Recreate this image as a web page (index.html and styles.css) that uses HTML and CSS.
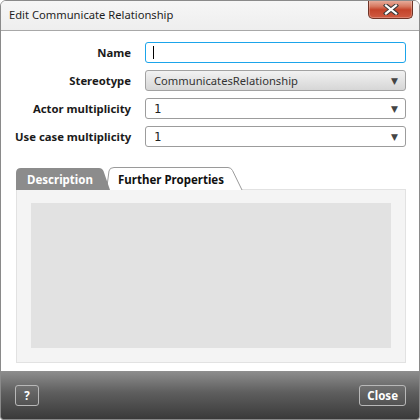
FILE: index.html
```html
<!DOCTYPE html>
<html>
<head>
<meta charset="utf-8">
<link rel="stylesheet" href="styles.css">
</head>
<body>
<div class="window">
  <div class="titlebar">
    <span class="title">Edit Communicate Relationship</span>
    <div class="close-x">
      <svg width="16" height="11" viewBox="0 0 16 11">
        <path d="M3 1.5 L13 9.5 M13 1.5 L3 9.5" stroke="#3a3a3a" stroke-width="4.2" stroke-linecap="square"/>
        <path d="M3 1.5 L13 9.5 M13 1.5 L3 9.5" stroke="#ffffff" stroke-width="2.2" stroke-linecap="square"/>
      </svg>
    </div>
  </div>
  <div class="body">
    <div class="form">
      <label class="lbl">Name</label>
      <div class="field input"><span class="caret"></span></div>
      <label class="lbl">Stereotype</label>
      <div class="field select grad"><span class="val sans">CommunicatesRelationship</span><span class="arrow">▼</span></div>
      <label class="lbl">Actor multiplicity</label>
      <div class="field select"><span class="val mono">1</span><span class="arrow">▼</span></div>
      <label class="lbl">Use case multiplicity</label>
      <div class="field select"><span class="val mono">1</span><span class="arrow">▼</span></div>
    </div>
    <div class="tabs">
      <div class="tabbar">
        <div class="tab tab-desc">
          <svg class="tabshape" width="94" height="23" viewBox="0 0 94 23">
            <path d="M0 23 V6 Q0 1 5 1 H83 Q86 1 87.5 4 L94 23 Z" fill="#8c8c8c"/>
          </svg>
          <span class="tabtext">Description</span>
        </div>
        <div class="tab tab-further">
          <svg class="tabshape" width="137" height="23" viewBox="0 0 137 23">
            <path d="M0.5 23 L3 4 Q3.5 0.5 8 0.5 H122 Q125 0.5 126.5 3.5 L136 23" fill="#ffffff" stroke="#9a9a9a" stroke-width="1"/>
          </svg>
          <span class="tabtext">Further Properties</span>
        </div>
      </div>
      <div class="panel">
        <div class="panel-inner"></div>
      </div>
    </div>
  </div>
  <div class="footer">
    <button class="btn">?</button>
    <button class="btn">Close</button>
  </div>
</div>
</body>
</html>
```
FILE: styles.css
```css
html, body {
  margin: 0;
  padding: 0;
  background: #ffffff;
}
body {
  font-family: "Noto Sans", "Open Sans", sans-serif;
  font-size: 11px;
  color: #1a1a1a;
}
.window {
  width: 420px;
  height: 420px;
  box-sizing: border-box;
  border: 1px solid #8a8a8a;
  border-radius: 6px 6px 3px 3px;
  display: flex;
  flex-direction: column;
  overflow: hidden;
  background: #ffffff;
}
.titlebar {
  height: 29px;
  flex: none;
  background: linear-gradient(#f6f6f6, #eeeeee);
  border-bottom: 1px solid #a8a8a8;
  display: flex;
  justify-content: space-between;
  align-items: flex-start;
}
.title {
  padding-left: 8px;
  line-height: 28px;
  font-size: 11.2px;
  color: #1e1e1e;
}
.close-x {
  width: 43px;
  height: 18px;
  margin-right: 6px;
  margin-top: -1px;
  border: 1px solid #6e3326;
  border-top: none;
  border-radius: 0 0 5px 5px;
  background: linear-gradient(#eab4a4 0%, #d77a62 35%, #c4432a 55%, #cf5b42 100%);
  box-shadow: inset 0 0 0 1px rgba(255,255,255,0.25);
  display: flex;
  align-items: center;
  justify-content: center;
}
.body {
  flex: 1;
  display: flex;
  flex-direction: column;
  padding: 11px 13px 8px 14px;
}
.form {
  display: grid;
  grid-template-columns: 116px 1fr;
  grid-auto-rows: 21px;
  column-gap: 14px;
  row-gap: 7px;
}
.lbl {
  font-weight: bold;
  text-align: right;
  line-height: 21px;
  font-size: 11.3px;
  white-space: nowrap;
  color: #1a1a1a;
}
.field {
  box-sizing: border-box;
  height: 21px;
  border-radius: 3px;
  display: flex;
  align-items: center;
  padding: 0 7px 0 8px;
}
.input {
  border: 1px solid #1ba4ea;
  background: #ffffff;
}
.caret {
  width: 1px;
  height: 13px;
  background: #000000;
  margin-left: -1px;
}
.select {
  border: 1px solid #9c9c9c;
  background: #ffffff;
  justify-content: space-between;
}
.grad {
  background: linear-gradient(#f2f2f2, #d6d6d6);
  border-color: #a2a2a2;
}
.val.sans {
  font-size: 11.2px;
  color: #333333;
}
.val.mono {
  font-family: "DejaVu Sans Mono", "Liberation Mono", monospace;
  font-size: 12px;
  color: #222222;
}
.arrow {
  font-size: 9px;
  color: #444444;
  font-family: "DejaVu Sans", sans-serif;
}
.tabs {
  margin-top: 20px;
  margin-left: 1px;
  flex: 1;
  display: flex;
  flex-direction: column;
}
.tabbar {
  height: 23px;
  display: flex;
  position: relative;
  z-index: 1;
  margin-bottom: -1px;
}
.tab {
  position: relative;
  height: 23px;
  display: flex;
  align-items: flex-end;
}
.tabshape {
  position: absolute;
  left: 0;
  top: 0;
}
.tabtext {
  position: relative;
  font-weight: bold;
  font-size: 11.5px;
  line-height: 20px;
  white-space: nowrap;
}
.tab-desc {
  width: 94px;
  z-index: 2;
}
.tab-desc .tabtext {
  color: #ffffff;
  padding-left: 11px;
}
.tab-further {
  width: 137px;
  margin-left: -4px;
  z-index: 1;
}
.tab-further .tabtext {
  color: #111111;
  padding-left: 12px;
}
.panel {
  flex: 1;
  background: #f4f4f4;
  border: 1px solid #e2e2e2;
  padding: 13px 14px 14px 14px;
  display: flex;
}
.panel-inner {
  flex: 1;
  background: #e2e2e2;
}
.footer {
  height: 48px;
  flex: none;
  background: linear-gradient(#8e8e8e 0%, #5e5e5e 45%, #3a3a3a 100%);
  display: flex;
  justify-content: space-between;
  align-items: flex-start;
  padding: 14px 13px 0 14px;
  box-sizing: border-box;
}
.btn {
  height: 21px;
  box-sizing: border-box;
  border: 1px solid #b8b8b8;
  border-radius: 3px;
  background: rgba(255,255,255,0.04);
  color: #ffffff;
  font-family: "Noto Sans", "Open Sans", sans-serif;
  font-weight: bold;
  font-size: 11.5px;
  padding: 0 7px;
  line-height: 19px;
}
.btn:first-child {
  width: 24px;
  padding: 0;
}
```
